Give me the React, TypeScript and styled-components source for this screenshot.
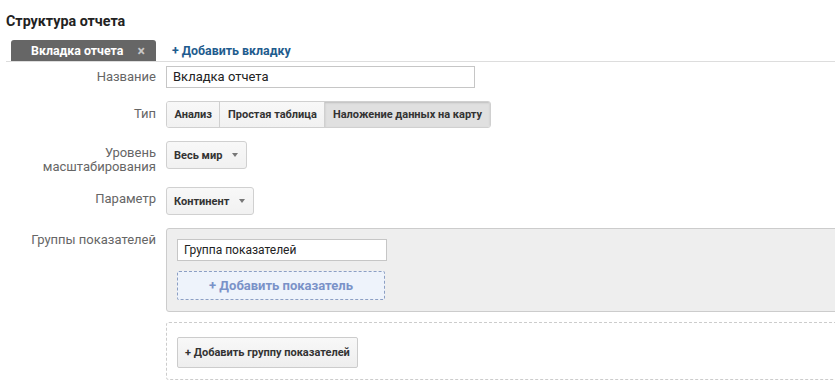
import styled, { createGlobalStyle } from "styled-components";

const GlobalStyle = createGlobalStyle`
  html, body {
    margin: 0;
    padding: 0;
    background: #ffffff;
    overflow: hidden;
  }
  body {
    font-family: Roboto, "Liberation Sans", Arial, sans-serif;
    color: #333333;
  }
`;

const Page = styled.div`
  width: 835px;
  height: 389px;
  overflow: hidden;
  padding: 13px 0 0 6px;
  box-sizing: border-box;
`;

const Title = styled.h2`
  margin: 0;
  font-size: 14.3px;
  line-height: 17px;
  font-weight: 700;
  color: #222222;
`;

const TabBar = styled.div`
  display: flex;
  align-items: flex-end;
  margin-top: 10px;
  padding-left: 5px;
  border-bottom: 1px solid #dddddd;
`;

const ActiveTab = styled.div`
  display: flex;
  align-items: center;
  height: 21px;
  width: 145px;
  box-sizing: border-box;
  padding: 0 11px 0 20px;
  background: #666666;
  border-radius: 3px 3px 0 0;
  color: #ffffff;
  font-size: 12.4px;
  font-weight: 700;
`;

const TabLabel = styled.span`
  flex: 1;
`;

const CloseMark = styled.span`
  color: #c8c8c8;
  font-size: 14px;
  font-weight: 700;
`;

const AddTab = styled.a`
  margin-left: 16px;
  height: 21px;
  line-height: 21px;
  color: #1f5c8e;
  font-size: 12.4px;
  font-weight: 700;
  text-decoration: none;
`;

const Form = styled.div`
  display: flex;
  flex-direction: column;
  margin-top: 4px;
`;

const Row = styled.div<{ $gap?: number }>`
  display: flex;
  align-items: flex-start;
  margin-bottom: ${(p) => p.$gap ?? 13}px;
`;

const Label = styled.div<{ $pt?: number }>`
  width: 150px;
  flex-shrink: 0;
  padding-top: ${(p) => p.$pt ?? 5}px;
  text-align: right;
  font-size: 13px;
  line-height: 14px;
  color: #666666;
`;

const Control = styled.div`
  margin-left: 10px;
  display: flex;
  flex-direction: column;
`;

const TextInput = styled.div<{ $w: number; $size?: number }>`
  width: ${(p) => p.$w}px;
  height: 22px;
  box-sizing: border-box;
  padding: 0 6px;
  border: 1px solid #c6c6c6;
  background: #ffffff;
  font-size: ${(p) => p.$size ?? 13}px;
  line-height: 20px;
  color: #222222;
`;

const Segmented = styled.div`
  display: flex;
  height: 27px;
  box-sizing: border-box;
  border: 1px solid #d0d0d0;
  border-radius: 3px;
  overflow: hidden;
`;

const Segment = styled.div<{ $active?: boolean }>`
  display: flex;
  align-items: center;
  padding: 0 7.5px;
  font-size: 11px;
  font-weight: 700;
  color: #333333;
  background: ${(p) =>
    p.$active ? "#e0e0e0" : "linear-gradient(#f8f8f8, #f1f1f1)"};
  box-shadow: ${(p) => (p.$active ? "inset 0 1px 2px rgba(0,0,0,0.15)" : "none")};
  & + & {
    border-left: 1px solid #d0d0d0;
  }
`;

const Dropdown = styled.div`
  display: flex;
  align-items: center;
  align-self: flex-start;
  height: 28px;
  box-sizing: border-box;
  padding: 0 8px 0 7px;
  border: 1px solid #d0d0d0;
  border-radius: 3px;
  background: linear-gradient(#f8f8f8, #f1f1f1);
  font-size: 11px;
  font-weight: 700;
  color: #333333;
`;

const Caret = styled.span`
  margin-left: 10px;
  width: 0;
  height: 0;
  border-left: 3.5px solid transparent;
  border-right: 3.5px solid transparent;
  border-top: 4px solid #777777;
`;

const GroupBox = styled.div`
  width: 700px;
  box-sizing: border-box;
  padding: 10px 10px 11px;
  background: #eeeeee;
  border: 1px solid #cccccc;
  border-radius: 3px;
  display: flex;
  flex-direction: column;
  gap: 10px;
`;

const AddMetric = styled.div`
  width: 208px;
  height: 29px;
  box-sizing: border-box;
  border: 1px dashed #8c9fc4;
  border-radius: 2px;
  background: #eef3fb;
  display: flex;
  align-items: center;
  justify-content: center;
  font-size: 13px;
  font-weight: 700;
  color: #7a92c8;
`;

const DashedArea = styled.div`
  margin-left: 160px;
  width: 700px;
  flex-shrink: 0;
  height: 58px;
  box-sizing: border-box;
  padding: 14px 10px;
  border: 1px dashed #cccccc;
  border-radius: 3px;
`;

const Button = styled.div`
  display: inline-flex;
  align-items: center;
  height: 31px;
  box-sizing: border-box;
  padding: 0 7px;
  border: 1px solid #cccccc;
  border-radius: 2px;
  background: linear-gradient(#f8f8f8, #eeeeee);
  font-size: 11px;
  font-weight: 700;
  color: #333333;
`;

export default function App() {
  return (
    <>
      <GlobalStyle />
      <Page>
        <Title>Структура отчета</Title>
        <TabBar>
          <ActiveTab>
            <TabLabel>Вкладка отчета</TabLabel>
            <CloseMark>×</CloseMark>
          </ActiveTab>
          <AddTab href="#">+ Добавить вкладку</AddTab>
        </TabBar>
        <Form>
          <Row>
            <Label $pt={4}>Название</Label>
            <Control>
              <TextInput $w={309}>Вкладка отчета</TextInput>
            </Control>
          </Row>
          <Row>
            <Label $pt={6}>Тип</Label>
            <Control>
              <Segmented>
                <Segment>Анализ</Segment>
                <Segment>Простая таблица</Segment>
                <Segment $active>Наложение данных на карту</Segment>
              </Segmented>
            </Control>
          </Row>
          <Row>
            <Label>
              Уровень
              <br />
              масштабирования
            </Label>
            <Control>
              <Dropdown>
                Весь мир
                <Caret />
              </Dropdown>
            </Control>
          </Row>
          <Row>
            <Label>Параметр</Label>
            <Control>
              <Dropdown>
                Континент
                <Caret />
              </Dropdown>
            </Control>
          </Row>
          <Row $gap={10}>
            <Label>Группы показателей</Label>
            <Control>
              <GroupBox>
                <TextInput $w={210} $size={12}>
                  Группа показателей
                </TextInput>
                <AddMetric>+ Добавить показатель</AddMetric>
              </GroupBox>
            </Control>
          </Row>
          <DashedArea>
            <Button>+ Добавить группу показателей</Button>
          </DashedArea>
        </Form>
      </Page>
    </>
  );
}
